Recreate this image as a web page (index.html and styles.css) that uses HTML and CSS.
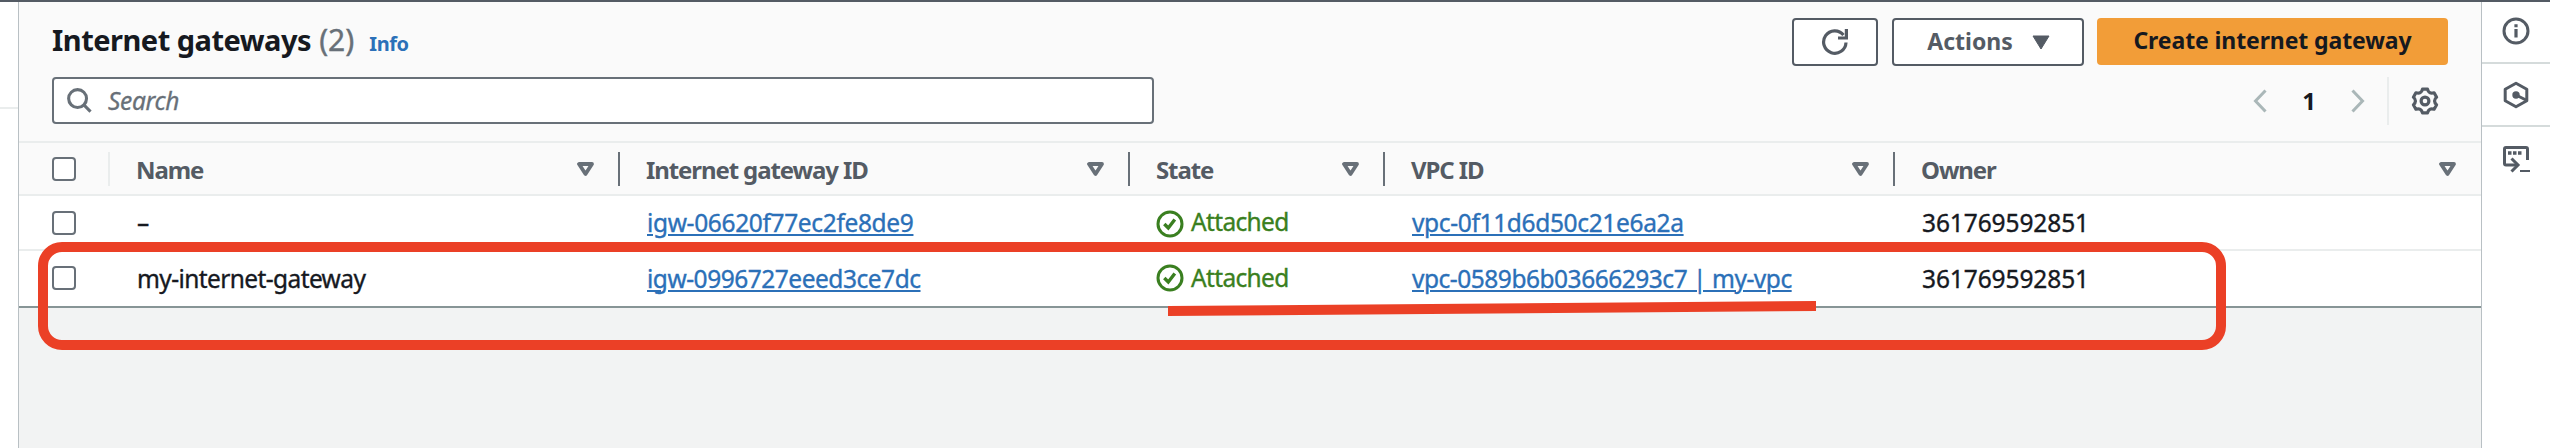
FILE: index.html
```html
<!DOCTYPE html>
<html lang="en">
<head>
<meta charset="utf-8">
<title>Internet gateways</title>
<link rel="stylesheet" href="styles.css">
</head>
<body>
<div class="app">
  <div class="side-nav"><div class="side-nav-line"></div></div>
  <main class="main">
    <section class="panel-head">
      <div class="title-row">
        <h1 class="title"><span class="title-name">Internet gateways</span><span class="count">(2)</span><a class="info">Info</a></h1>
        <div class="actions">
          <button class="btn btn-refresh"><svg width="28" height="28" viewBox="0 0 28 28"><path d="M25 14.5A11.2 11.2 0 1 1 22.500 7" fill="none" stroke="#545b64" stroke-width="3.2"/><path d="M25.4 1v9H17" fill="none" stroke="#545b64" stroke-width="3.200"/></svg></button>
          <button class="btn btn-menu"><span>Actions</span><svg width="18" height="15" viewBox="0 0 18 15"><path d="M1 1h16L9 14z" fill="#545b64" stroke="#545b64" stroke-linejoin="round"/></svg></button>
          <button class="btn-primary">Create internet gateway</button>
        </div>
      </div>
      <div class="filter-row">
        <div class="search"><svg width="25" height="25" viewBox="0 0 26 26" fill="none" stroke="#687078" stroke-width="3.200"><circle cx="11" cy="11" r="9.3"/><path d="M17.5 17.5l7 7"/></svg><span class="placeholder">Search</span></div>
        <div class="pager">
          <svg width="14" height="24" viewBox="0 0 14 24"><path d="M12.5 1.5L2.5 12l10 10.500" fill="none" stroke="#aab7b8" stroke-width="3"/></svg>
          <span class="page">1</span>
          <svg width="14" height="24" viewBox="0 0 14 24"><path d="M1.500 1.500L11.500 12l-10 10.500" fill="none" stroke="#aab7b8" stroke-width="3"/></svg>
          <span class="pager-line"></span>
          <svg width="28" height="28" viewBox="0 0 28 28" fill="none" stroke="#545b64" stroke-width="3.200" stroke-linejoin="round"><circle cx="14" cy="14" r="3.900"/><path d="M11.500 2.100H16.500Q17.750 7.500 23.100 5.800L25.600 10.200Q21.500 14 25.600 17.800L23.100 22.200Q17.750 20.500 16.500 25.900H11.500Q10.250 20.500 4.900 22.200L2.400 17.800Q6.500 14 2.400 10.200L4.900 5.800Q10.250 7.500 11.500 2.100z"/></svg>
        </div>
      </div>
    </section>
    <div class="table">
      <div class="row header">
        <div class="check"><i class="box"></i></div>
        <div class="cell"><span>Name</span><svg class="sort" viewBox="0 0 17 15"><path d="M2 2h13L8.500 12z"/></svg></div>
        <div class="cell"><span>Internet gateway ID</span><svg class="sort" viewBox="0 0 17 15"><path d="M2 2h13L8.500 12z"/></svg></div>
        <div class="cell"><span>State</span><svg class="sort" viewBox="0 0 17 15"><path d="M2 2h13L8.500 12z"/></svg></div>
        <div class="cell"><span>VPC ID</span><svg class="sort" viewBox="0 0 17 15"><path d="M2 2h13L8.500 12z"/></svg></div>
        <div class="cell"><span>Owner</span><svg class="sort" viewBox="0 0 17 15"><path d="M2 2h13L8.500 12z"/></svg></div>
      </div>
      <div class="row first">
        <div class="check"><i class="box"></i></div>
        <div class="cell"><span>–</span></div>
        <div class="cell"><a class="link">igw-06620f77ec2fe8de9</a></div>
        <div class="cell state"><svg width="28" height="28" viewBox="0 0 28 28" fill="none" stroke-width="3"><circle cx="14" cy="14" r="12"/><path d="M8.300 14l4 4L18.800 9.500" stroke-width="3.400"/></svg><span>Attached</span></div>
        <div class="cell"><a class="link">vpc-0f11d6d50c21e6a2a</a></div>
        <div class="cell"><span class="num">361769592851</span></div>
      </div>
      <div class="row last">
        <div class="check"><i class="box"></i></div>
        <div class="cell"><span class="name">my-internet-gateway</span></div>
        <div class="cell"><a class="link">igw-0996727eeed3ce7dc</a></div>
        <div class="cell state"><svg width="28" height="28" viewBox="0 0 28 28" fill="none" stroke-width="3"><circle cx="14" cy="14" r="12"/><path d="M8.300 14l4 4L18.800 9.500" stroke-width="3.400"/></svg><span>Attached</span></div>
        <div class="cell"><a class="link">vpc-0589b6b03666293c7 | my-vpc</a></div>
        <div class="cell"><span class="num">361769592851</span></div>
      </div>
    </div>
  </main>
  <aside class="rail">
    <div class="tool"><svg width="28" height="28" viewBox="0 0 28 28" fill="none" stroke="#545b64" stroke-width="3"><circle cx="14" cy="14" r="12"/><path d="M14 7.200v3M14 12v8.500" stroke-width="3.200"/></svg></div>
    <div class="tool"><svg width="28" height="28" viewBox="0 0 28 28" fill="none" stroke="#545b64" stroke-width="3" stroke-linejoin="round"><path d="M14 2.200l10.800 6v11.600L14 25.800l-10.800-6V8.200z"/><circle cx="14" cy="14" r="3.700" fill="#545b64" stroke="none"/><path d="M14 14l10 5"/></svg></div>
    <div class="tool"><svg width="28" height="28" viewBox="0 0 28 28" fill="none" stroke="#545b64" stroke-width="3"><path d="M15 20H4a1.500 1.500 0 0 1-1.500-1.500V4A1.500 1.500 0 0 1 4 2.500h20A1.500 1.500 0 0 1 25.500 4v11"/><path d="M9.500 13.500l6.500 6.500-6.500 6.500"/><path d="M6 8h3.500M11 8h3.500M16 8h3.500" stroke-width="3.400"/><path d="M18 26h10" stroke-width="2"/></svg></div>
  </aside>
</div>
<div class="mark-box"></div>
<svg class="mark-line" width="648" height="15" viewBox="0 0 648 15"><path d="M0 5L648 0V10L0 15z" fill="#eb4026"/></svg>
</body>
</html>
```
FILE: styles.css
```css
* { box-sizing: border-box; }
body { margin: 0; font-family: "Noto Sans", sans-serif; font-size: 24.5px; color: #16191f; overflow: hidden; }
svg { flex: none; }
.app { display: flex; width: 2550px; height: 448px; border-top: 2px solid #545b64; background: #f2f3f3; }
.side-nav { width: 19px; background: #fff; border-right: 1px solid #b9c0c4; padding-top: 105px; }
.side-nav-line { height: 2px; background: #eaeded; }
.main { width: 2462px; }
.panel-head { height: 139px; padding: 16px 33px 0; background: #fafafa; }
.title-row { display: flex; justify-content: space-between; height: 48px; }
.title { margin: 0; display: flex; align-items: baseline; font-size: 29px; line-height: 44px; }
.title-name { letter-spacing: -0.5px; }
.count { margin-left: 8px; color: #687078; font-weight: 400; font-size: 30px; -webkit-text-stroke: 0.4px; }
.info { margin-left: 15px; color: #2b70b8; font-size: 20px; letter-spacing: -0.4px; }
.actions { display: flex; gap: 14px; }
.btn, .btn-primary { display: flex; align-items: center; justify-content: center; height: 48px; margin: 0; padding: 0 0 3px; border: 2px solid #545b64; border-radius: 4px; background: #fff; color: #545b64; font: bold 23px "Noto Sans", sans-serif; }
.btn-refresh { width: 86px; padding: 0; }
.btn-menu { width: 192px; gap: 19px; padding-left: 1px; }
.btn-menu svg { margin-top: 3px; }
.btn-primary { width: 351px; height: 47px; margin-left: -1px; border: 0; background: #f29d38; color: #16191f; letter-spacing: -0.1px; }
.filter-row { display: flex; justify-content: space-between; margin-top: 11px; }
.search { display: flex; align-items: center; width: 1102px; height: 47px; padding: 0 13px; border: 2px solid #687078; border-radius: 4px; background: #fff; }
.placeholder { margin-left: 16px; color: #687078; font-style: italic; letter-spacing: -0.3px; -webkit-text-stroke: 0.3px; }
.pager { display: flex; align-items: center; height: 47px; padding-right: 9px; }
.page { width: 84px; text-align: center; font-weight: 700; font-size: 24px; }
.pager-line { width: 2px; height: 48px; margin: 0 22px; background: #eaeded; }
.row { display: grid; grid-template-columns: 91px 510px 510px 255px 510px 586px; background: #fff; -webkit-text-stroke: 0.35px; }
.check { display: flex; align-items: center; padding-left: 33px; }
.box { width: 24px; height: 24px; border: 2px solid #687078; border-radius: 4px; background: #fff; }
.cell { display: flex; align-items: center; padding-left: 27px; }
.header { height: 55px; border-top: 2px solid #eaeded; border-bottom: 2px solid #eaeded; background: #fafafa; color: #545b64; font-size: 24px; font-weight: 700; letter-spacing: -1.1px; -webkit-text-stroke: 0; }
.header .check, .header .cell { height: 34px; margin-top: 9px; border-right: 2px solid #687078; }
.header .check { border-color: #eaeded; }
.header .cell { justify-content: space-between; padding-left: 26px; padding-right: 24px; }
.header .cell:last-child { border: 0; padding-right: 25px; }
.sort { width: 17px; height: 15px; fill: none; stroke: #687078; stroke-width: 3.8; stroke-linejoin: round; }
.first { height: 55px; border-bottom: 2px solid #eaeded; }
.last { height: 57px; padding-bottom: 1px; border-bottom: 2px solid #879596; }
.link { color: #2b70b8; text-decoration: underline; text-decoration-thickness: 2px; text-underline-offset: 2px; letter-spacing: -0.35px; }
.last .link { letter-spacing: -0.48px; }
.name { letter-spacing: -0.6px; }
.num { letter-spacing: -0.1px; }
.state { color: #3a7f20; letter-spacing: -0.65px; }
.state svg { stroke: #3a7f20; margin-left: -1px; margin-right: 7px; }
.first .state svg { margin-top: 3px; }
.state span { padding-bottom: 2px; }
.rail { width: 69px; border-left: 1px solid #b9c0c4; background: #fff; }
.tool { display: flex; align-items: center; justify-content: center; height: 63px; border-bottom: 2px solid #d5dbdb; }
.tool:first-child { height: 62px; padding-bottom: 3px; }
.tool:last-child { border: 0; }
.mark-box { position: absolute; left: 38px; top: 242px; width: 2188px; height: 108px; border: 10px solid #eb4026; border-radius: 24px; }
.mark-line { position: absolute; left: 1168px; top: 301px; }
```
